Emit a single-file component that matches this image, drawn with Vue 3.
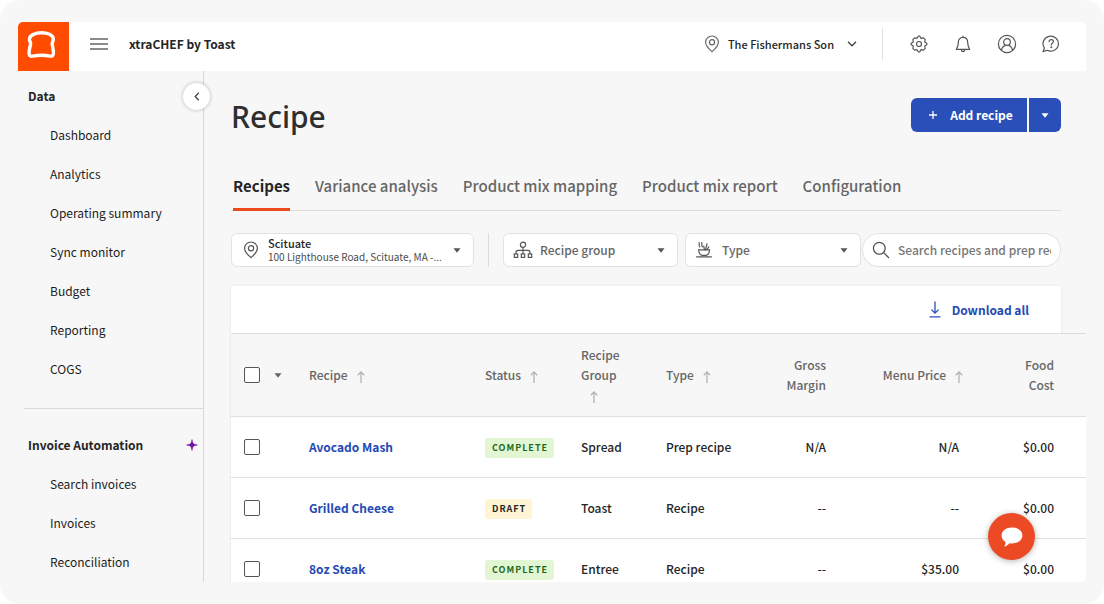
<script setup>
import { ref } from 'vue'

const dataLinks = ['Dashboard', 'Analytics', 'Operating summary', 'Sync monitor', 'Budget', 'Reporting', 'COGS']
const invoiceLinks = ['Search invoices', 'Invoices', 'Reconciliation']
const tabs = ['Recipes', 'Variance analysis', 'Product mix mapping', 'Product mix report', 'Configuration']
const activeTab = ref('Recipes')
const search = ref('')

const rows = [
  { name: 'Avocado Mash', status: 'Complete', group: 'Spread', type: 'Prep recipe', margin: 'N/A', price: 'N/A', cost: '$0.00' },
  { name: 'Grilled Cheese', status: 'Draft', group: 'Toast', type: 'Recipe', margin: '--', price: '--', cost: '$0.00' },
  { name: '8oz Steak', status: 'Complete', group: 'Entree', type: 'Recipe', margin: '--', price: '$35.00', cost: '$0.00' },
]
</script>

<template>
  <div class="frame">
    <div class="app">
      <header class="topbar">
        <a href="#" class="logo" aria-label="Toast home">
          <svg width="51" height="49" viewBox="0 0 51 49">
            <path
              d="M23.500 10.800C29 10.800 35.300 12.800 35.300 17C35.300 19 34.500 20 34.200 21.200C34 24 35.600 27 35.400 31.200C35.200 33.800 34.400 34.400 32.400 34.100C27 33 20 33 14.600 34.100C12.200 34.500 11.200 33.700 11.100 31.200C10.900 27 12.600 24 12.600 21.200C12.400 19.800 11.300 19 11.400 17C11.700 12.800 18 10.800 23.500 10.800Z"
              fill="none" stroke="#fff" stroke-width="3.400" stroke-linejoin="round" />
          </svg>
        </a>
        <div class="bar">
          <button class="icon-btn menu" aria-label="Menu">
            <svg width="18" height="12" viewBox="0 0 18 12"><path d="M0 1h18M0 6h18M0 11h18" stroke="#666" stroke-width="1.300" /></svg>
          </button>
          <span class="brand">xtraCHEF by Toast</span>
          <button class="restaurant">
            <svg class="pin" width="16" height="18" viewBox="0 0 16 18" fill="none" stroke="#666" stroke-width="1.200">
              <path d="M8 16.600C5.500 14.500 1.600 10.800 1.600 7.200a6.400 6.200 0 0 1 12.800 0C14.400 10.800 10.500 14.500 8 16.600Z" /><circle cx="8" cy="7.200" r="2.600" />
            </svg>
            <span>The Fishermans Son</span>
            <svg width="10" height="6" viewBox="0 0 10 6"><path d="M1 .8l4 4 4-4" fill="none" stroke="#444" stroke-width="1.300" /></svg>
          </button>
          <div class="tools">
            <button class="icon-btn" aria-label="Settings">
              <svg width="18" height="18" viewBox="0 0 18 18" fill="none" stroke="#555" stroke-width="1.200" stroke-linejoin="round">
                <path d="M7 3.300L8.200 1.200H9.800L11 3.300L13.400 2.800L15.200 4.600L14.700 7L16.800 8.200V9.800L14.700 11L15.200 13.400L13.400 15.200L11 14.700L9.800 16.800H8.200L7 14.700L4.600 15.200L2.800 13.400L3.300 11L1.200 9.800V8.200L3.300 7L2.800 4.600L4.600 2.800Z" />
                <circle cx="9" cy="9" r="2.500" />
              </svg>
            </button>
            <button class="icon-btn" aria-label="Notifications">
              <svg width="18" height="18" viewBox="0 0 18 18" fill="none" stroke="#555" stroke-width="1.200" stroke-linecap="round" stroke-linejoin="round">
                <path d="M9 1v1.400M9 2.400C5.800 2.400 4.300 4.800 4.300 7.600C4.300 11 3.500 12 2.300 14.400H15.700C14.500 12 13.700 11 13.700 7.600C13.700 4.800 12.200 2.400 9 2.400ZM7.300 14.600C7.500 17.200 10.500 17.200 10.700 14.600" />
              </svg>
            </button>
            <button class="icon-btn" aria-label="Account">
              <svg width="20" height="20" viewBox="0 0 20 20" fill="none" stroke="#555" stroke-width="1.200">
                <circle cx="10" cy="10" r="8.600" /><circle cx="10" cy="8" r="3.300" />
                <path d="M4.500 16.300C5 13.500 6.500 12 8.300 11.600M11.700 11.600C13.500 12 15 13.500 15.500 16.300" />
              </svg>
            </button>
            <button class="icon-btn" aria-label="Help">
              <svg width="18" height="18" viewBox="0 0 18 18" fill="none" stroke="#555" stroke-width="1.200" stroke-linecap="round" stroke-linejoin="round">
                <path d="M1 16.600L2.400 12.900A7.700 7.500 0 1 1 5.200 15.300Z" />
                <path d="M7.100 6.600C7.100 3.800 11.500 3.900 11.400 6.500C11.300 8.200 9.300 8 9.300 10" /><circle cx="9.300" cy="12.200" r=".4" fill="#555" />
              </svg>
            </button>
          </div>
        </div>
      </header>

      <div class="body">
        <aside class="sidebar">
          <button class="collapse" aria-label="Collapse navigation">
            <svg width="6" height="9" viewBox="0 0 6 9"><path d="M4.800 .8L1.200 4.500l3.600 3.700" fill="none" stroke="#444" stroke-width="1.300" /></svg>
          </button>
          <nav>
            <h2>Data</h2>
            <a v-for="link in dataLinks" :key="link" href="#">{{ link }}</a>
          </nav>
          <nav class="second">
            <h2>
              Invoice Automation
              <svg width="12" height="12" viewBox="0 0 12 12"><path d="M6 .6C6.500 4.500 7.500 5.500 11.400 6C7.500 6.500 6.500 7.500 6 11.400C5.500 7.500 4.500 6.500 .6 6C4.500 5.500 5.500 4.500 6 .6Z" fill="#7414a8" stroke="#7414a8" stroke-width=".6" /></svg>
            </h2>
            <a v-for="link in invoiceLinks" :key="link" href="#">{{ link }}</a>
          </nav>
        </aside>

        <main class="main">
          <div class="title-row">
            <h1>Recipe</h1>
            <div class="split">
              <button class="add">
                <svg width="10" height="10" viewBox="0 0 10 10"><path d="M5 1v8M1 5h8" stroke="#fff" stroke-width="1.300" /></svg>
                Add recipe
              </button>
              <button class="more" aria-label="More add options">
                <svg width="8" height="5" viewBox="0 0 8 5"><path d="M.5 .3h7L4 4.700Z" fill="#fff" /></svg>
              </button>
            </div>
          </div>

          <div class="tabs" role="tablist">
            <button
              v-for="tab in tabs" :key="tab" role="tab" class="tab"
              :class="{ active: tab === activeTab }" :aria-selected="tab === activeTab" @click="activeTab = tab"
            >{{ tab }}</button>
          </div>

          <div class="filters">
            <button class="field location">
              <svg class="pin" width="16" height="18" viewBox="0 0 16 18" fill="none" stroke="#555" stroke-width="1.200">
                <path d="M8 16.600C5.500 14.500 1.600 10.800 1.600 7.200a6.400 6.200 0 0 1 12.800 0C14.400 10.800 10.500 14.500 8 16.600Z" /><circle cx="8" cy="7.200" r="2.600" />
              </svg>
              <span class="place">
                <span class="place-name">Scituate</span>
                <span class="place-address">100 Lighthouse Road, Scituate, MA -...</span>
              </span>
              <svg width="8" height="5" viewBox="0 0 8 5"><path d="M.5 .3h7L4 4.700Z" fill="#555" /></svg>
            </button>
            <span class="rule"></span>
            <div class="picker">
              <svg class="lead" width="20" height="18" viewBox="0 0 20 18" fill="none" stroke="#555" stroke-width="1.200">
                <circle cx="10" cy="3.800" r="2.600" />
                <path d="M10 6.400V13M3 13v-1.500C3 10 3.600 9.300 5 9.300H15C16.400 9.300 17 10 17 11.500V13" />
                <rect x="1.300" y="13" width="3.400" height="3.400" /><rect x="8.300" y="13" width="3.400" height="3.400" /><rect x="15.300" y="13" width="3.400" height="3.400" />
              </svg>
              <select class="field" aria-label="Recipe group"><option>Recipe group</option></select>
              <svg class="caret" width="8" height="5" viewBox="0 0 8 5"><path d="M.5 .3h7L4 4.700Z" fill="#555" /></svg>
            </div>
            <div class="picker type">
              <svg class="lead" width="18" height="18" viewBox="0 0 18 18" fill="none" stroke="#555" stroke-width="1.200" stroke-linecap="round">
                <path d="M1.600 15.900H16.400M3.600 8.800H14.600C14.400 12 13 13.900 11 14.300H7.200C5.200 13.900 3.800 12 3.600 8.800Z" />
                <path d="M4 1.600C5 2.600 3.400 4 4.800 5.800M6.600 1.600C7.600 2.600 6 4 7.400 5.800M9.400 8.600L8.800 5.200M10.600 8.600L12 2.800M12 8.600L13.800 5.800" />
              </svg>
              <select class="field" aria-label="Type"><option>Type</option></select>
              <svg class="caret" width="8" height="5" viewBox="0 0 8 5"><path d="M.5 .3h7L4 4.700Z" fill="#555" /></svg>
            </div>
            <label class="field search">
              <svg width="18" height="18" viewBox="0 0 18 18" fill="none" stroke="#555" stroke-width="1.300"><circle cx="7.300" cy="7.300" r="5.900" /><path d="M11.600 11.600L17 17" /></svg>
              <input v-model="search" type="text" placeholder="Search recipes and prep recipes" aria-label="Search recipes and prep recipes">
            </label>
          </div>

          <div class="actions">
            <button class="download">
              <svg width="12" height="17" viewBox="0 0 12 17" fill="none" stroke="#2b4fb9" stroke-width="1.300"><path d="M6 .5V12M2.400 8.600L6 12.200 9.600 8.600M.5 15.800h11" /></svg>
              Download all
            </button>
          </div>

          <table>
            <colgroup>
              <col class="c-check"><col><col class="c-status"><col class="c-group"><col class="c-type"><col class="c-margin"><col class="c-price"><col class="c-cost">
            </colgroup>
            <thead>
              <tr>
                <th>
                  <span class="pick">
                    <input type="checkbox" aria-label="Select all recipes">
                    <button class="icon-btn" aria-label="Selection options">
                      <svg width="8" height="5" viewBox="0 0 8 5"><path d="M.5 .3h7L4 4.700Z" fill="#666" /></svg>
                    </button>
                  </span>
                </th>
                <th>Recipe<svg class="sort" viewBox="0 0 8 12"><path d="M4 12V1M.8 4.200L4 1l3.200 3.200" /></svg></th>
                <th>Status<svg class="sort" viewBox="0 0 8 12"><path d="M4 12V1M.8 4.200L4 1l3.200 3.200" /></svg></th>
                <th>Recipe<br>Group<br><svg class="sort" viewBox="0 0 8 12"><path d="M4 12V1M.8 4.200L4 1l3.200 3.200" /></svg></th>
                <th>Type<svg class="sort" viewBox="0 0 8 12"><path d="M4 12V1M.8 4.200L4 1l3.200 3.200" /></svg></th>
                <th class="num">Gross<br>Margin</th>
                <th class="num price-head">Menu Price<svg class="sort" viewBox="0 0 8 12"><path d="M4 12V1M.8 4.200L4 1l3.200 3.200" /></svg></th>
                <th class="num cost">Food<br>Cost</th>
              </tr>
            </thead>
            <tbody>
              <tr v-for="row in rows" :key="row.name">
                <td><span class="pick"><input type="checkbox" :aria-label="'Select ' + row.name"></span></td>
                <td><a href="#" class="recipe">{{ row.name }}</a></td>
                <td><span class="badge" :class="row.status.toLowerCase()">{{ row.status }}</span></td>
                <td>{{ row.group }}</td>
                <td>{{ row.type }}</td>
                <td class="num">{{ row.margin }}</td>
                <td class="num price">{{ row.price }}</td>
                <td class="num cost">{{ row.cost }}</td>
              </tr>
            </tbody>
          </table>
        </main>
      </div>

      <button class="chat" aria-label="Open chat">
        <svg width="22" height="20" viewBox="0 0 22 20"><path d="M11 .4C17 .4 21.400 3.800 21.400 8.400C21.400 13 17 16.400 11 16.400C10 16.400 9.200 16.300 8.400 16.200C7 18.200 5 19.300 3 19.600C4 18.200 4.600 16.800 4.500 15C2 13.500 .6 11.200 .6 8.400C.6 3.800 5 .4 11 .4Z" fill="#fff" /></svg>
      </button>
    </div>
  </div>
</template>

<style>
body {
  background: #fff;
}
</style>

<style scoped>
* {
  box-sizing: border-box;
}
.frame {
  height: 100vh;
  padding: 22px 18px;
  border-radius: 20px;
  background: #f7f7f7;
  color: #252525;
  font: 500 12px/20px "Noto Sans CJK JP", "Noto Sans", sans-serif;
}
.app {
  position: relative;
  display: flex;
  flex-direction: column;
  height: 100%;
  border-radius: 5px;
  overflow: hidden;
}
button, select, input {
  margin: 0;
  font: inherit;
  color: inherit;
}
button {
  padding: 0;
  border: 0;
  background: none;
}
a {
  color: inherit;
  text-decoration: none;
}
svg {
  flex: none;
}
.icon-btn {
  display: flex;
  align-items: center;
  justify-content: center;
}
.topbar {
  display: flex;
  flex: none;
  height: 49px;
  background: #fff;
}
.logo {
  display: flex;
  background: #ff4c00;
}
.bar {
  display: flex;
  align-items: center;
  flex: 1;
  padding-bottom: 5px;
}
.menu {
  margin: 0 21px;
}
.brand {
  font-weight: 700;
}
.restaurant {
  display: flex;
  align-items: center;
  margin-left: auto;
  padding-right: 25px;
  font-size: 11px;
}
.restaurant span {
  margin: 0 13px 0 8px;
}
.tools {
  display: flex;
  align-items: center;
  gap: 24px;
  height: 34px;
  padding: 0 25px 0 26px;
  border-left: 1px solid #e2e2e2;
}
.tools .icon-btn {
  width: 20px;
}
.body {
  display: flex;
  flex: 1;
  min-height: 0;
}
.sidebar {
  position: relative;
  flex: none;
  width: 186px;
  padding-top: 5px;
  border-right: 1px solid #d8d8d8;
}
.collapse {
  position: absolute;
  top: 12px;
  right: -7px;
  display: flex;
  align-items: center;
  justify-content: center;
  width: 27px;
  height: 27px;
  border-radius: 50%;
  background: #fff;
  box-shadow: 0 0 4px rgba(0, 0, 0, .25);
}
nav h2, nav a {
  display: flex;
  align-items: center;
  height: 39px;
  margin: 0;
  font-size: 12px;
}
nav h2 {
  justify-content: space-between;
  padding: 0 5px 0 10px;
  font-weight: 700;
}
nav a {
  padding-left: 32px;
  font-weight: 400;
  color: #1c1c1c;
}
.second {
  margin: 20px 0 0 6px;
  padding-top: 16px;
  border-top: 1px solid #d8d8d8;
}
.second h2 {
  padding-left: 4px;
}
.second a {
  padding-left: 26px;
}
.main {
  flex: 1;
  min-width: 0;
  padding: 27px 0 0 27px;
}
.title-row, .tabs, .filters, .actions {
  margin-right: 25px;
}
.title-row {
  display: flex;
  align-items: center;
  justify-content: space-between;
  height: 34px;
}
h1 {
  margin: 0;
  padding-top: 4px;
  font: 500 30px/34px "Noto Sans", sans-serif;
  color: #2e2e2e;
}
.split {
  display: flex;
  gap: 2px;
  height: 34px;
}
.add, .more {
  display: flex;
  align-items: center;
  justify-content: center;
  background: #2b4fb9;
  color: #fff;
  font-weight: 700;
}
.add {
  gap: 12px;
  width: 116px;
  padding-left: 3px;
  border-radius: 6px 0 0 6px;
}
.more {
  width: 32px;
  border-radius: 0 6px 6px 0;
}
.tabs {
  display: flex;
  gap: 25px;
  margin-top: 30px;
  padding-left: 2px;
  border-bottom: 1px solid #dcdcdc;
}
.tab {
  height: 49px;
  margin-bottom: -1px;
  padding-top: 2px;
  border-bottom: 3px solid transparent;
  font-size: 15px;
  color: #666;
}
.tab.active {
  border-color: #ec4a1c;
  font-weight: 700;
  color: #252525;
}
.filters {
  display: grid;
  grid-template-columns: minmax(0, 243fr) 29px minmax(0, 175fr) minmax(0, 183fr) minmax(0, 200fr);
  margin-top: 22px;
}
.field {
  height: 34px;
  border: 1px solid #e2e2e2;
  border-radius: 6px;
  background: #fff;
}
.location {
  display: flex;
  align-items: center;
  padding: 0 12px 0 11px;
  text-align: left;
}
.place {
  display: flex;
  flex-direction: column;
  flex: 1;
  min-width: 0;
  margin-left: 9px;
  white-space: nowrap;
}
.place-name {
  font-size: 11px;
  line-height: 14px;
}
.place-address {
  font-size: 10px;
  line-height: 14px;
  font-weight: 400;
  color: #4c4c4c;
}
.rule {
  width: 1px;
  margin: 0 14px;
  background: #dcdcdc;
}
.picker {
  position: relative;
}
.picker.type {
  margin-left: 7px;
}
.picker select {
  width: 100%;
  padding: 0 30px 0 36px;
  appearance: none;
  color: #666;
}
.lead, .caret {
  position: absolute;
  top: 8px;
  left: 10px;
  pointer-events: none;
}
.caret {
  top: 15px;
  left: auto;
  right: 13px;
}
.search {
  display: flex;
  align-items: center;
  gap: 8px;
  margin-left: 1px;
  padding: 0 9px;
  border-radius: 17px;
}
.search input {
  flex: 1;
  min-width: 0;
  padding: 0;
  border: 0;
  outline: 0;
  background: none;
}
.search input::placeholder {
  color: #777;
}
.actions {
  display: flex;
  align-items: center;
  justify-content: flex-end;
  height: 47px;
  margin-top: 19px;
  padding-right: 32px;
  background: #fff;
  box-shadow: 0 0 3px rgba(0, 0, 0, .08);
}
.download {
  display: flex;
  align-items: center;
  gap: 11px;
  color: #2549b4;
  font-weight: 700;
}
table {
  position: relative;
  width: 100%;
  table-layout: fixed;
  border-collapse: separate;
  border-spacing: 0;
  background: #fff;
  box-shadow: 0 2px 2px rgba(0, 0, 0, .12);
}
.c-check { width: 78px; }
.c-status { width: 96px; }
.c-group { width: 85px; }
.c-type { width: 80px; }
.c-margin { width: 80px; }
.c-price { width: 133px; }
.c-cost { width: 127px; }
th, td {
  padding: 0;
  border-bottom: 1px solid #e0e0e0;
  text-align: left;
  white-space: nowrap;
}
th {
  height: 84px;
  border-top: 1px solid #dcdcdc;
  background: #f7f7f7;
  font-weight: 500;
  color: #666;
}
td {
  height: 61px;
}
.num {
  text-align: right;
}
.cost {
  padding-right: 32px;
}
.pick {
  display: flex;
  align-items: center;
  gap: 14px;
  padding-left: 13px;
}
.pick input {
  width: 16px;
  height: 16px;
  border: 1px solid #555;
  border-radius: 2px;
  background: #fff;
  appearance: none;
}
.sort {
  width: 8px;
  height: 12px;
  margin-left: 9px;
  vertical-align: middle;
  fill: none;
  stroke: #b4b4b4;
  stroke-width: 1.3;
}
.price-head .sort {
  margin-right: -4px;
}
.recipe {
  font-weight: 700;
  color: #2549b4;
}
.badge {
  display: inline-block;
  padding: 0 6px 0 7px;
  border-radius: 3px;
  font-size: 9px;
  font-weight: 700;
  letter-spacing: 1px;
  text-transform: uppercase;
}
.complete {
  background: #e3f6d3;
  color: #1d6b1a;
}
.draft {
  background: #fff4d3;
}
.chat {
  position: absolute;
  right: 51px;
  bottom: 22px;
  display: flex;
  align-items: center;
  justify-content: center;
  width: 47px;
  height: 47px;
  border-radius: 50%;
  background: #ec4a24;
  box-shadow: 0 1px 6px rgba(0, 0, 0, .3);
}
</style>
